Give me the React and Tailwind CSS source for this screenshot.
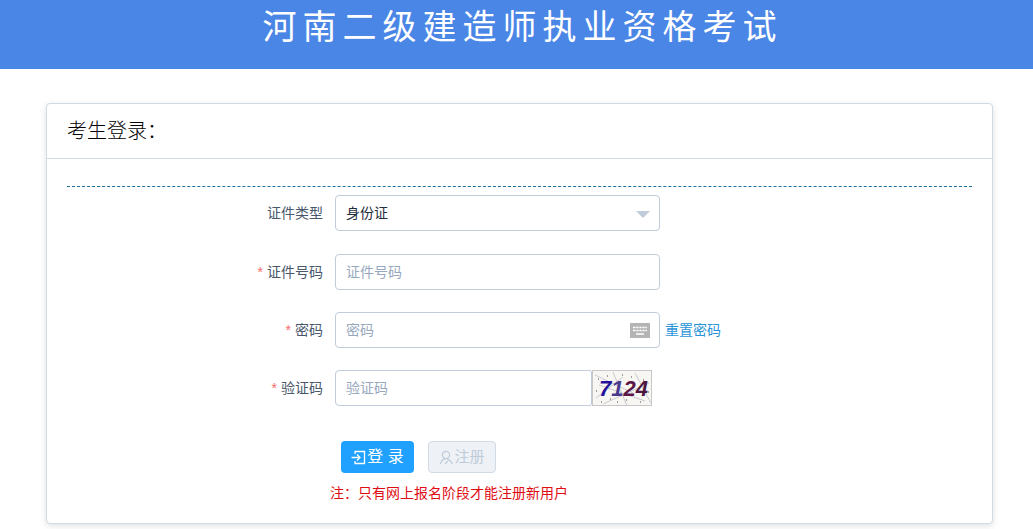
const cjk = "font-['Liberation_Sans','Noto_Sans_CJK_SC',sans-serif]";

function FormRow({ label, required, first, children }) {
  return (
    <div className={first ? "flex items-center h-9 mb-[23px]" : "flex items-center h-9 mb-[22px]"}>
      <label className="w-[268px] pr-3 text-right text-[14px] text-[#48576a]">
        {required && <span className="text-[#f56c6c] mr-1">*</span>}
        {label}
      </label>
      {children}
    </div>
  );
}

function Keyboard() {
  return (
    <svg width="20" height="15" viewBox="0 0 20 15" className="absolute right-[10px] top-[11px]">
      <rect width="20" height="15" fill="#b4b4b4" />
      <path d="M3 4.5h14M3 7.5h14M6 11h8" stroke="#fff" strokeWidth="1.3" />
      <path d="M6 3.5v5M9 3.5v5M12 3.5v5M15 3.5v5" stroke="#b4b4b4" strokeWidth="0.8" />
    </svg>
  );
}

function LoginIcon() {
  return (
    <svg width="15" height="15" viewBox="0 0 15 15" fill="none" stroke="currentColor" strokeWidth="1.3">
      <path d="M4 4V1.5h9.5v12H4V11" />
      <path d="M0.5 7.5h8M6 4.5l3 3-3 3" />
    </svg>
  );
}

function RegisterIcon() {
  return (
    <svg width="15" height="15" viewBox="0 0 15 15" fill="none" stroke="currentColor" strokeWidth="1.2">
      <circle cx="7" cy="5" r="3.6" />
      <path d="M1.5 14c.6-3 2.4-4.8 4.5-5.2M8 9c2.2.6 4.4 2.6 5.5 5M6 14l3-3" />
    </svg>
  );
}

function Captcha() {
  return (
    <div className="relative w-[60px] h-9 border border-[#c8c8c8] overflow-hidden bg-[#f7f6f2]">
      <svg width="60" height="36" className="absolute left-0 top-0">
        <path d="M2 4L40 22M10 33L56 12M20 1L34 35M3 27L30 6M42 2L58 32M6 14L52 30" stroke="#b9b4c4" strokeWidth="0.7" fill="none" />
        <path d="M5 8h1M14 5h1M24 31h1M38 6h1M50 9h1M55 21h1M8 31h1M17 28h1M33 29h1M47 31h1M3 20h1M29 4h1" stroke="#444" strokeWidth="1" />
      </svg>
      <div className="relative flex justify-center items-center h-full pl-[3px] italic font-bold text-[22px] font-['Liberation_Sans',sans-serif]">
        <span className="text-[#26129a]">7</span>
        <span className="text-[#4a3a8e]">1</span>
        <span className="text-[#5c1646]">2</span>
        <span className="text-[#4c1640]">4</span>
      </div>
    </div>
  );
}

export default function App() {
  return (
    <div className={`${cjk} bg-white h-[529px] overflow-hidden`}>
      <div className="h-[69px] bg-[#4a86e6] flex justify-center pt-[4px] pl-[12px]">
        <h1 className="text-[34px] leading-[46px] font-normal tracking-[6px] text-white">
          河南二级建造师执业资格考试
        </h1>
      </div>

      <div className="ml-[46px] mr-[40px] mt-[34px] h-[421px] bg-white border border-[#d1dbe5] rounded-[4px] shadow-[0_2px_6px_rgba(0,0,0,0.12)]">
        <div className="h-[55px] px-5 flex items-center border-b border-[#d1dbe5] text-[20px] font-light text-black">
          考生登录：
        </div>
        <div className="px-5 pt-[27px]">
          <div className="border-t border-dashed border-[#1f6f9f] mb-2" />

          <FormRow label="证件类型" first>
            <div className="relative w-[325px] h-9 border border-[#c0ccda] rounded-[4px] flex items-center px-[10px] text-[14px] text-[#1f2d3d]">
              身份证
              <span className="absolute right-[9px] top-[15px] w-0 h-0 border-x-[7px] border-x-transparent border-t-[7px] border-t-[#c0ccda]" />
            </div>
          </FormRow>

          <FormRow label="证件号码" required>
            <input placeholder="证件号码" className="w-[325px] h-9 border border-[#c0ccda] rounded-[4px] px-[10px] text-[14px] outline-none placeholder:text-[#97a8be]" />
          </FormRow>

          <FormRow label="密码" required>
            <div className="relative w-[325px] h-9">
              <input placeholder="密码" className="w-full h-9 border border-[#c0ccda] rounded-[4px] px-[10px] text-[14px] outline-none placeholder:text-[#97a8be]" />
              <Keyboard />
            </div>
            <a className="ml-[5px] text-[14px] text-[#2a94d8]">重置密码</a>
          </FormRow>

          <FormRow label="验证码" required>
            <input placeholder="验证码" className="w-[257px] h-9 border border-[#c0ccda] rounded-l-[4px] rounded-r-[2px] px-[10px] text-[14px] outline-none placeholder:text-[#97a8be]" />
            <Captcha />
          </FormRow>

          <div className="flex pl-[274px] mt-[35px] gap-[14px]">
            <button className="w-[73px] h-8 bg-[#20a0ff] rounded-[4px] text-white text-[16px] flex items-center justify-center">
              <LoginIcon />
              <span className="ml-[1px]">登 录</span>
            </button>
            <button disabled className="w-[68px] h-8 bg-[#eef1f6] border border-[#d1dbe5] rounded-[4px] text-[#bfcbd9] text-[15px] flex items-center justify-center">
              <RegisterIcon />
              注册
            </button>
          </div>
          <p className="mt-[11px] pl-[263px] text-[14px] leading-[18px] text-[#e00c14]">
            注：只有网上报名阶段才能注册新用户
          </p>
        </div>
      </div>
    </div>
  );
}
